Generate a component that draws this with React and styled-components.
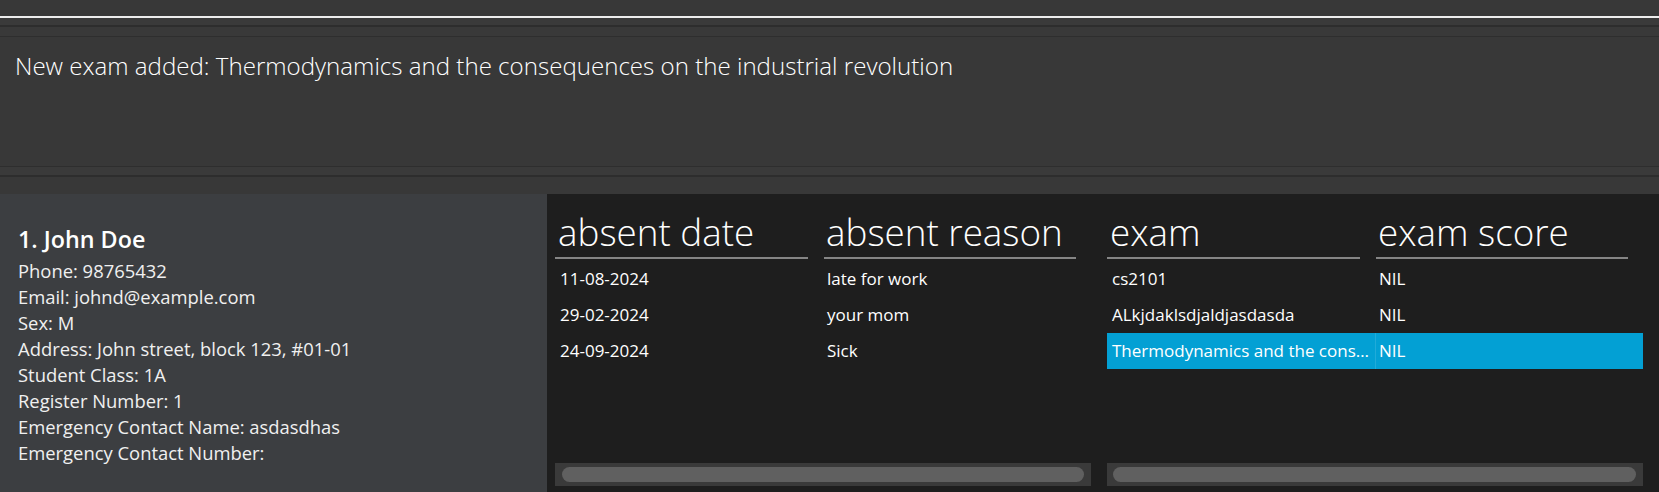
import React from 'react';
import styled, { createGlobalStyle } from 'styled-components';

const GlobalStyle = createGlobalStyle`
  html, body { margin: 0; padding: 0; background: #383838; }
  body { width: 1659px; height: 492px; overflow: hidden; font-family: "Open Sans", "Noto Sans", sans-serif; }
  #root { height: 100%; }
  * { box-sizing: border-box; }
`;

const Window = styled.div`
  width: 1659px;
  height: 492px;
  display: flex;
  flex-direction: column;
  background: #383838;
  overflow: hidden;
`;

const CommandBox = styled.div`
  height: 18px;
  flex-shrink: 0;
  background: #383838;
  border-bottom: 2px solid #ededed;
`;

const UpperSplit = styled.div`
  height: 19px;
  flex-shrink: 0;
  background: linear-gradient(
    to bottom,
    #3a3a3a 0px, #3a3a3a 7px,
    #2d2d2d 7px, #2d2d2d 9px,
    #393939 9px, #393939 18px,
    #2e2e2e 18px, #2e2e2e 19px
  );
`;

const ResultDisplay = styled.div`
  height: 129px;
  flex-shrink: 0;
  padding: 13px 15px 0 15px;
  background: #383838;
  color: #ffffff;
  font-family: "Open Sans", "Noto Sans", sans-serif;
  font-weight: 300;
  font-size: 24.1px;
  line-height: 32px;
`;

const LowerSplit = styled.div`
  height: 28px;
  flex-shrink: 0;
  background: linear-gradient(
    to bottom,
    #2e2e2e 0px, #2e2e2e 1px,
    #3a3a3a 1px, #3a3a3a 9px,
    #2d2d2d 9px, #2d2d2d 11px,
    #383838 11px, #383838 28px
  );
`;

const Main = styled.div`
  flex: 1;
  display: flex;
  min-height: 0;
`;

const PersonCard = styled.div`
  width: 547px;
  flex-shrink: 0;
  background: #3c3e41;
  padding: 28px 18px 0 18px;
  display: flex;
  flex-direction: column;
`;

const Name = styled.div`
  font-family: "Open Sans", "Noto Sans", sans-serif;
  font-weight: 600;
  font-size: 23.3px;
  line-height: 34px;
  color: #ffffff;
  margin-bottom: 2px;
`;

const Detail = styled.div`
  font-family: "Open Sans", "Noto Sans", sans-serif;
  font-weight: 400;
  font-size: 18.4px;
  line-height: 26px;
  color: #f0f0f0;
`;

const TablesPanel = styled.div`
  flex: 1;
  background: #1e1e1e;
  display: flex;
  gap: 16px;
  padding: 0 16px 6px 8px;
`;

const Table = styled.div`
  flex: 1;
  min-width: 0;
  display: flex;
  flex-direction: column;
`;

const HeaderRow = styled.div`
  display: grid;
  grid-template-columns: 1fr 1fr;
  height: 67px;
  flex-shrink: 0;
`;

const HeaderCell = styled.div`
  margin: 0 15px 2px ${p => (p.$first ? '0' : '1px')};
  padding: 0 0 6px ${p => (p.$first ? '3px' : '2px')};
  border-bottom: 2px solid #858585;
  display: flex;
  align-items: flex-end;
  font-family: "Open Sans", "Noto Sans", sans-serif;
  font-weight: 300;
  font-size: 36.8px;
  line-height: 1;
  color: #ffffff;
  white-space: nowrap;
`;

const Row = styled.div`
  display: grid;
  grid-template-columns: 1fr 1fr;
  height: 36px;
  flex-shrink: 0;
  background: ${p => (p.$selected ? '#03a0d4' : 'transparent')};
`;

const Cell = styled.div`
  min-width: 0;
  padding-left: ${p => (p.$first ? '5px' : '3px')};
  border-left: ${p => (p.$first ? 'none' : `1px solid ${p.$selected ? 'rgba(255,255,255,0.12)' : 'transparent'}`)};
  font-family: "Open Sans", "Noto Sans", sans-serif;
  font-size: 17px;
  line-height: 36px;
  color: #ffffff;
  white-space: nowrap;
  overflow: hidden;
  text-overflow: ellipsis;
`;

const Body = styled.div`
  flex: 1;
`;

const ScrollTrack = styled.div`
  height: 23px;
  flex-shrink: 0;
  background: #3a3a3a;
  padding: 4px 7px 4px ${p => (p.$left ? '7px' : '6px')};
`;

const ScrollThumb = styled.div`
  height: 100%;
  border-radius: 8px;
  background: #606060;
`;

const person = {
  name: '1. John Doe',
  details: [
    'Phone: 98765432',
    'Email: johnd@example.com',
    'Sex: M',
    'Address: John street, block 123, #01-01',
    'Student Class: 1A',
    'Register Number: 1',
    'Emergency Contact Name: asdasdhas',
    'Emergency Contact Number:',
  ],
};

const absences = [
  ['11-08-2024', 'late for work'],
  ['29-02-2024', 'your mom'],
  ['24-09-2024', 'Sick'],
];

const exams = [
  ['cs2101', 'NIL'],
  ['ALkjdaklsdjaldjasdasda', 'NIL'],
  ['Thermodynamics and the consequences on the industrial revolution', 'NIL'],
];

function DataTable({ headers, rows, selected, left }) {
  return (
    <Table>
      <HeaderRow>
        {headers.map((h, i) => (
          <HeaderCell key={h} $first={i === 0}>{h}</HeaderCell>
        ))}
      </HeaderRow>
      {rows.map((r, ri) => (
        <Row key={ri} $selected={ri === selected}>
          {r.map((c, ci) => (
            <Cell key={ci} $first={ci === 0} $selected={ri === selected}>{c}</Cell>
          ))}
        </Row>
      ))}
      <Body />
      <ScrollTrack $left={left}>
        <ScrollThumb />
      </ScrollTrack>
    </Table>
  );
}

export default function App() {
  return (
    <>
      <GlobalStyle />
      <Window>
        <CommandBox />
        <UpperSplit />
        <ResultDisplay>
          New exam added: Thermodynamics and the consequences on the industrial revolution
        </ResultDisplay>
        <LowerSplit />
        <Main>
          <PersonCard>
            <Name>{person.name}</Name>
            {person.details.map(d => (
              <Detail key={d}>{d}</Detail>
            ))}
          </PersonCard>
          <TablesPanel>
            <DataTable headers={['absent date', 'absent reason']} rows={absences} selected={-1} left />
            <DataTable headers={['exam', 'exam score']} rows={exams} selected={2} />
          </TablesPanel>
        </Main>
      </Window>
    </>
  );
}
